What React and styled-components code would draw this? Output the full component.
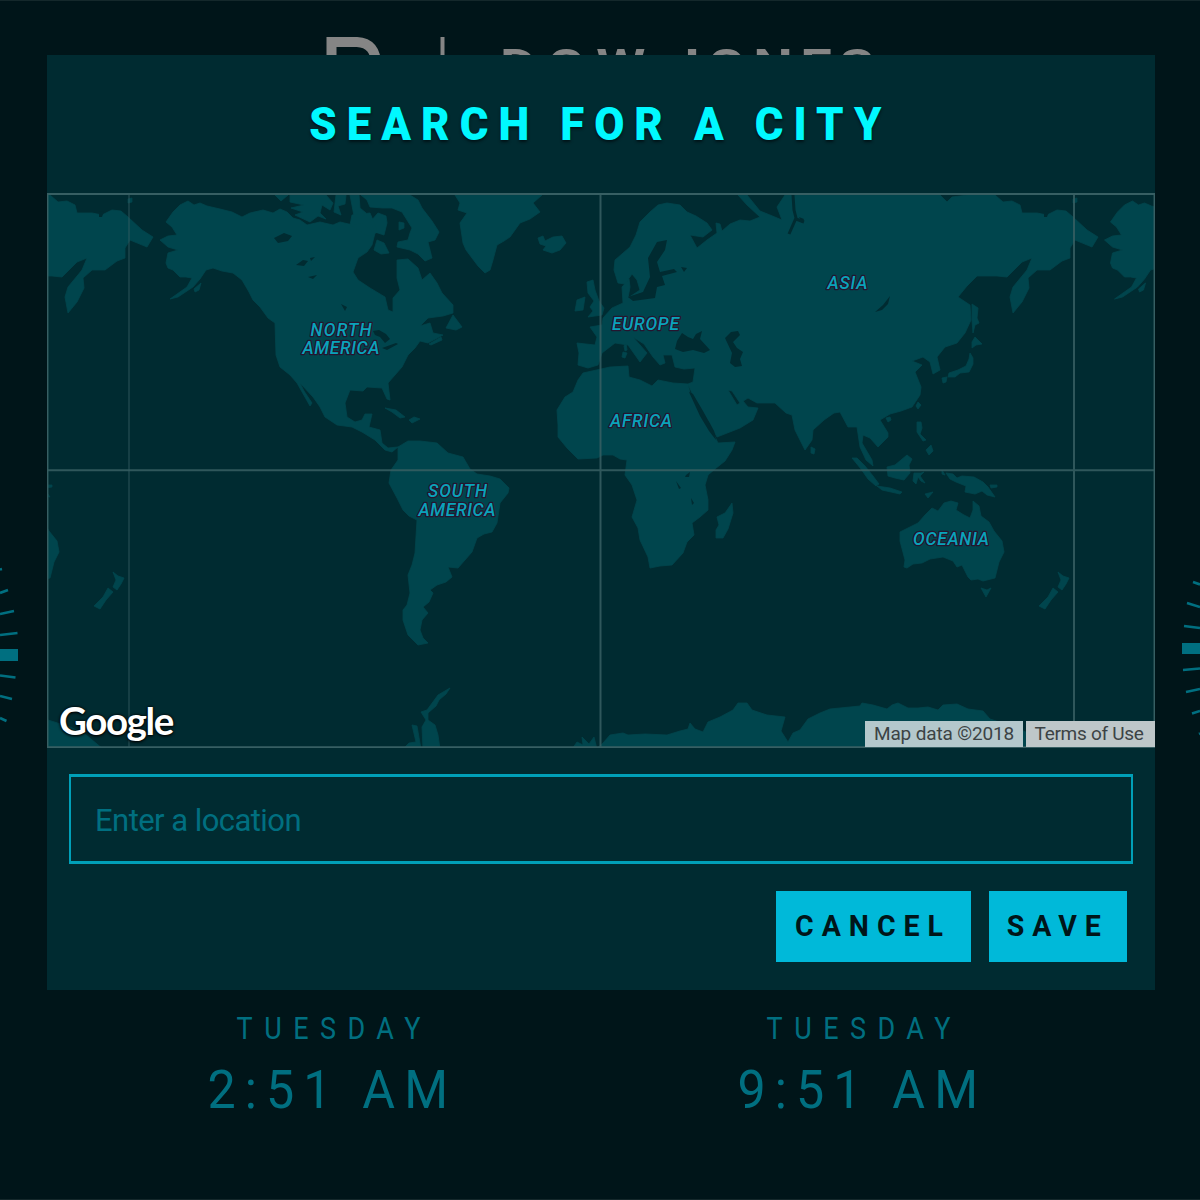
import React from 'react';
import styled, { createGlobalStyle } from 'styled-components';

const color = {
  page: '#001519',
  panel: '#002b31',
  land: '#00454d',
  line: '#375f63',
  teal: '#006f80',
  cyan: '#00b9d9',
  bright: '#00f8ff',
  logo: '#858585',
};

const GlobalStyle = createGlobalStyle`
  *, *::before, *::after { box-sizing: border-box; }
  body { margin: 0; background: ${color.page}; font-family: Roboto, "Liberation Sans", sans-serif; }
`;

const Page = styled.main`
  position: relative;
  width: 1200px;
  height: 1200px;
  overflow: hidden;
  display: flex;
  flex-direction: column;
  background: ${color.page};
  border-top: 1px solid #14282b;
  border-bottom: 1px solid #14282b;
`;

const Masthead = styled.header`
  display: flex;
  align-items: flex-start;
  padding: 36px 0 0 326px;
  height: 120px;
`;

const LogoMark = styled.svg`
  display: block;
  width: 120px;
  height: 60px;
`;

const LogoWords = styled.div`
  display: flex;
  gap: 7px;
  margin: 2px 0 0 54px;
  color: ${color.logo};
  font-size: 46px;
  line-height: 54px;
  font-weight: 700;
  transform: scaleX(1.22);
  transform-origin: left;
`;

const LogoWord = styled.span`
  width: ${(p) => p.$width}px;
  letter-spacing: ${(p) => p.$track}px;
  white-space: nowrap;
`;

const Dials = styled.div`
  display: flex;
  justify-content: space-between;
  height: 200px;
  margin: 419px 0 272px;
`;

const Dial = styled.svg`
  display: block;
  width: 20px;
  height: 200px;
`;

const Clocks = styled.footer`
  display: grid;
  grid-template-columns: 530px 530px;
  justify-content: center;
  height: 187px;
`;

const Clock = styled.div`
  display: flex;
  flex-direction: column;
  align-items: center;
  color: ${color.teal};
`;

const Squeeze = styled.span`
  display: inline-block;
  white-space: nowrap;
  transform: scaleX(${(p) => p.$x});
`;

const Day = styled.div`
  margin-top: -1px;
  padding-right: 2px;
  font-size: 31px;
  line-height: 36px;
  letter-spacing: 13.2px;
`;

const Time = styled.div`
  margin-top: 11px;
  padding-right: 5px;
  font-size: 54px;
  line-height: 64px;
  font-weight: 380;
  letter-spacing: 9.8px;
`;

const Dialog = styled.section`
  position: absolute;
  left: 47px;
  top: 54px;
  width: 1108px;
  height: 935px;
  display: flex;
  flex-direction: column;
  background: ${color.panel};
`;

const DialogHeader = styled.div`
  height: 138px;
  display: flex;
  align-items: center;
  justify-content: center;
`;

const Title = styled.h1`
  margin: 0;
  padding: 0 2px 1px 0;
  color: ${color.bright};
  font-size: 46px;
  line-height: 54px;
  font-weight: 900;
  letter-spacing: 10.6px;
  text-shadow: 0 2px 3px rgba(0, 12, 16, 0.8);
`;

const MapFrame = styled.div`
  position: relative;
  height: 555px;
`;

const MapCanvas = styled.svg`
  display: block;
  width: 100%;
  height: 100%;
`;

const MapText = styled.text`
  font: italic 500 17.5px Roboto, "Liberation Sans", sans-serif;
  fill: #0aa3ba;
  stroke: #25152f;
  stroke-width: 2.6px;
  stroke-linejoin: round;
  paint-order: stroke;
`;

const Brand = styled.div`
  position: absolute;
  left: 12px;
  bottom: 5px;
  color: #fff;
  font: 700 38.5px/46px Lato, sans-serif;
  letter-spacing: -1.4px;
  text-shadow: 0 0 3px #000, 0 1px 3px #000;
`;

const Attribution = styled.div`
  position: absolute;
  right: 0;
  bottom: 1px;
  display: flex;
  gap: 3px;
  height: 26px;
`;

const Credit = styled.span`
  width: ${(p) => p.$width}px;
  padding-right: ${(p) => p.$shift || 0}px;
  background: ${(p) => p.$tint};
  color: #3c4345;
  font-size: 19px;
  line-height: 25px;
  text-align: center;
  white-space: nowrap;
  letter-spacing: ${(p) => p.$track}px;
`;

const Form = styled.form`
  display: flex;
  flex-direction: column;
  gap: 27px;
  padding: 26px 22px 0;
`;

const LocationInput = styled.input`
  display: block;
  width: 1064px;
  height: 90px;
  padding: 2px 24px 0;
  border: 3px solid #00a0b8;
  border-width: 3px 2px;
  outline: none;
  background: transparent;
  color: ${color.cyan};
  font: 400 31px Roboto, "Liberation Sans", sans-serif;
  letter-spacing: -0.55px;
  &::placeholder { color: ${color.teal}; opacity: 1; }
`;

const Actions = styled.div`
  display: flex;
  justify-content: flex-end;
  gap: 18px;
  padding-right: 6px;
`;

const Button = styled.button`
  display: flex;
  align-items: center;
  justify-content: center;
  width: ${(p) => p.$width}px;
  height: 71px;
  padding: 0 1px 3px 0;
  border: 0;
  background: ${color.cyan};
  color: #001519;
  font: 700 30px Roboto, "Liberation Sans", sans-serif;
  letter-spacing: 8.4px;
`;

const LAND = [
  // North America
  'M166 222L173 212L180 205L188 201L194 205L200 203L207 206L220 209L232 212L242 217L250 213L263 210L273 213L280 209L287 212L293 218L300 220L307 225L320 222L333 225L340 222L353 225L362 223L375 233L372 245L367 252L358 258L353 272L358 280L370 288L385 297L388 310L393 312L393 298L400 290L397 278L397 260L408 259L418 268L422 280L430 273L437 283L442 293L453 305L453 313L443 316L428 318L420 326L430 323L433 333L443 335L428 343L420 341L415 348L408 355L402 367L388 383L390 400L387 399L382 388L367 387L363 391L350 390L345 403L347 417L355 422L362 420L365 414L372 414L369 427L380 430L382 443L388 448L398 447L392 452L385 450L375 440L362 432L352 427L337 425L325 417L320 407L313 397L300 383L304 391L312 403L310 406L297 383L290 375L280 367L276 355L275 323L268 318L260 307L253 300L249 292L242 280L233 273L222 271L213 268L206 270L200 279L193 287L178 297L170 299L187 287L192 278L186 277L180 277L173 270L168 268L166 263L168 253L178 250L168 247L160 240L168 236L177 235L172 227Z',
  // Arctic archipelago
  'M275 195H288L281 201ZM290 195H326L333 203L330 210L322 205L320 213L326 219L318 216L310 222L295 215L303 212L291 208L304 205L290 202Z',
  'M336 195H346L345 204L338 206L341 215L334 212ZM350 195H359L360 208L366 213L361 219L354 216ZM378 213L386 216L387 223L384 235L375 232L370 222ZM352 215L370 213L378 232L368 236L350 225Z',
  'M361 195H410L418 200L422 208L432 221L439 232L435 240L428 242L432 258L425 261L418 254L410 250L397 247L398 242L408 240L410 233L412 228L402 212L392 208L383 208L370 207L367 200Z',
  'M377 240L384 243L389 253L381 254L374 250ZM399 222L404 223L404 228L399 230ZM453 315L462 327L456 330L446 328ZM429 344L441 337L442 340L431 345Z',
  'M194 289L201 283L199 290L195 292ZM385 408L396 410L405 417L400 418L392 412ZM409 420L414 417L420 419L412 423Z',
  // Greenland and Iceland
  'M455 195H542L533 203L540 212L530 219L520 223L510 237L504 241L497 245L493 260L490 270L485 273L478 266L472 258L466 250L463 243L460 223L467 213L458 210L460 203Z',
  'M538 238L543 236L545 241L553 237L562 236L566 243L560 250L552 253L543 250L546 246L540 244Z',
  // South America
  'M398 447L408 441L420 441L437 443L448 453L463 457L470 469L477 474L490 476L500 479L509 488L508 493L500 503L497 523L492 532L484 534L477 538L472 552L465 560L458 568L448 567L452 577L446 582L437 585L430 590L433 593L429 602L423 607L428 613L422 620L420 630L423 638L428 643L418 645L408 635L403 620L403 610L407 605L410 593L408 575L412 565L415 553L417 520L409 516L403 510L397 498L389 483L391 470L398 460Z',
  // Africa and Madagascar
  'M583 373L592 371L610 367L628 366L629 377L640 380L652 386L658 380L673 383L688 384L690 393L700 413L715 437L718 443L735 442L732 450L725 461L715 469L708 475L705 485L708 500L708 510L700 517L692 523L694 535L687 542L683 553L672 565L660 566L650 568L648 557L640 540L638 528L632 517L637 500L632 485L625 475L627 460L620 459L613 455L603 455L597 458L578 459L567 448L558 437L558 425L557 410L565 397L573 392L578 380Z',
  'M732 503L733 513L728 529L723 538L716 538L716 530L719 525L717 517L725 513Z',
  // Eurasia
  'M577 343L595 345L597 337L590 327L602 325L603 318L612 308L623 303L622 287L629 279L630 287L628 298L640 290L637 280L632 274L625 284L618 283L614 270L615 260L630 247L636 235L640 222L650 212L658 205L667 203L680 205L687 212L696 216L707 223L712 230L703 237L690 235L697 248L707 240L717 233L716 223L720 224L722 231L730 224L740 220L750 221L760 217L747 205L738 195H747L760 211L770 215L782 220L777 207L785 195H940L947 202L952 197L968 195H995L1003 202L1012 201L1020 205L1022 213L1037 213L1047 215L1057 210L1066 211L1073 217L1087 230L1098 237L1092 247L1075 240L1070 248L1070 258L1062 261L1050 270L1037 270L1028 278L1029 288L1022 302L1013 313L1010 297L1013 287L1027 270L1032 258L1022 262L1007 277L997 276L977 276L967 286L958 297L970 305L971 320L965 333L957 343L945 347L937 357L940 370L933 374L930 362L923 357L912 361L922 365L915 372L921 387L920 395L912 407L901 411L890 414L880 420L888 433L888 437L878 447L870 438L863 435L862 443L872 460L873 466L866 460L860 447L857 427L848 427L840 412L834 413L824 420L813 430L812 440L805 450L795 430L792 415L786 413L775 403L757 403L748 398L740 403L732 391L728 390L737 405L743 401L748 407L758 408L753 420L740 428L717 437L710 423L703 413L692 393L688 384L693 382L695 368L684 369L675 367L672 355L663 355L665 363L660 365L653 357L644 344L633 337L647 353L640 362L628 345L615 343L602 353L598 365L588 368L578 365L579 353Z',
  // British Isles and the Mediterranean islands
  'M587 282L593 280L595 290L599 301L604 308L602 315L588 317L593 311L590 307L594 301L588 293ZM577 300L585 297L583 310L575 311ZM624 346L626 343L627 350L625 351ZM623 352L627 353L625 358L622 357Z',
  // Japan, Sakhalin and Taiwan
  'M972 304L978 308L977 318L979 323L975 325L973 333L972 320ZM975 337L982 344L976 345L972 348L972 342ZM970 353L973 358L973 364L969 372L960 373L955 377L948 377L949 373L958 370L966 366L969 359ZM942 378L947 377L946 382L943 383ZM918 402L921 405L918 409L916 406Z',
  // South-east Asia
  'M886 418L890 417L891 420L888 422ZM917 422L921 422L922 428L920 434L926 440L923 441L917 432ZM926 450L931 445L933 451L929 455ZM811 447L815 449L814 454L811 453ZM852 458L857 458L865 466L873 476L879 484L876 486L868 479L861 469ZM877 486L890 488L902 492L900 494L882 490Z',
  'M887 467L895 465L901 460L907 455L912 459L909 465L910 473L904 480L895 478L888 476ZM914 473L921 473L924 472L920 476L925 483L921 481L918 477L916 484L913 481ZM946 473L953 474L957 478L962 476L974 477L983 482L988 487L995 497L987 495L982 491L975 494L965 492L966 486L956 482L950 479Z',
  'M990 485L997 485L997 487L991 488ZM925 494L933 492L928 498ZM942 470L945 475L942 474Z',
  // Oceania
  'M900 532L918 523L925 515L932 508L938 511L944 503L951 501L958 503L956 510L964 515L970 518L973 510L973 501L979 506L981 516L989 522L994 531L1002 541L1004 552L999 562L995 578L983 581L978 579L971 580L968 577L965 571L962 565L957 567L953 561L943 557L930 559L922 563L913 564L907 568L904 567L905 560L900 541Z',
  'M981 588L987 590L991 588L986 597ZM1058 572L1063 576L1069 578L1066 584L1062 590L1058 587L1061 580ZM1053 588L1058 592L1051 600L1045 609L1039 606L1048 597ZM1073 199L1077 198L1077 202L1073 203Z',
  // Antarctica
  'M450 688L446 694L439 700L436 706L428 713L428 720L435 725L438 735L440 749H423L422 727L426 720L421 712L427 710L438 695ZM403 749L409 743L416 742L412 725L417 726L421 749ZM572 749L577 742L583 745L582 737L589 744L594 737L597 749Z',
  'M596 749L603 743L610 735L623 733L628 735L645 734L667 735L680 731L688 729L690 723L695 729L703 732L708 722L720 717L733 710L738 703L747 703L752 710L767 715L785 717L781 731L788 742L793 733L800 730L808 719L820 713L830 709L860 706L862 703L873 705L887 709L892 705L898 703L908 708L918 708L928 707L938 710L943 705L957 704L968 709L983 711L990 719L1015 727L1030 734L1048 749Z',
].join('');

const WATER = [
  // Baltic
  'M667 240L657 242L648 258L650 277L643 292L628 297L633 301L655 298L657 287L665 285L662 276L677 272L674 269L660 272L657 262L665 250Z',
  // Black Sea, Azov and Caspian
  'M682 333L688 337L693 339L696 334L702 331L700 339L710 350L704 353L693 350L683 352L675 349L677 341ZM738 331L731 332L725 338L732 353L730 363L735 367L742 366L740 359L743 352L737 348L733 342L740 335Z',
  // Red Sea
  'M689 392L693 394L703 411L714 431L716 440L709 431L700 416Z',
  // Great Lakes and northern lakes
  'M373 331L379 330L386 334L390 339L385 343L380 337L375 335ZM382 348L396 343L398 344L387 350ZM274 238L284 233L292 236L288 241L278 243ZM296 265L303 260L308 261L304 266ZM308 277L317 275L313 279ZM310 258L315 257L311 261ZM341 304L347 307L345 311ZM681 267L687 268L684 272ZM686 475L690 472L689 477L685 477ZM676 481L681 488L679 489ZM691 498L694 503L692 505ZM890 296L888 304L882 310L875 312L883 305ZM799 217L804 219L802 223ZM1044 212L1049 211L1047 217L1044 217Z',
].join('');

const LABELS = [
  { text: 'NORTH', x: 341, y: 336.2, width: 61 },
  { text: 'AMERICA', x: 341, y: 354, width: 77 },
  { text: 'SOUTH', x: 457.5, y: 497.3, width: 59 },
  { text: 'AMERICA', x: 457, y: 515.6, width: 77 },
  { text: 'EUROPE', x: 645.5, y: 329.5, width: 67 },
  { text: 'AFRICA', x: 641, y: 427.3, width: 62 },
  { text: 'ASIA', x: 847.5, y: 288.7, width: 40 },
  { text: 'OCEANIA', x: 951, y: 545.3, width: 76 },
];

const LEFT_TICKS = 'M0 29.5L2 29M0 53L8 50M0 74L14 71M0 95L17.5 93M0 135.5L15.5 137.5M0 156L12 159M0 178L6.5 181';
const RIGHT_TICKS = 'M13 42L20 44.5M7 63L20 67M4 86L20 88M3 130L20 128.5M6 152L20 149M12 173.5L20 171M19 194L20 193.5';

function WorldMap() {
  return (
    <MapCanvas viewBox="47 193 1108 555" role="img" aria-label="World map">
      <defs>
        <g id="world">
          <path d={LAND} fill={color.land} stroke={color.land} strokeWidth="0.8" strokeLinejoin="round" />
          <path d={WATER} fill={color.panel} />
          <path d="M793 195L794 210L796 218L789 234M796 219L804 222" fill="none" stroke={color.panel} strokeWidth="3" />
        </g>
      </defs>
      <use href="#world" />
      <use href="#world" x="-945" />
      <use href="#world" x="944.5" />
      <g fill="none" stroke={color.line}>
        <path d="M129 193V748" strokeWidth="2" opacity="0.4" />
        <path d="M600.5 193V748M1074 193V748M47 470.3H1155" strokeWidth="2" opacity="0.85" />
        <path d="M47 194H1155M47 747.3H1155" strokeWidth="2.2" />
        <path d="M47.7 193V748M1154.3 193V748" strokeWidth="1.5" />
      </g>
      {LABELS.map((l) => (
        <MapText key={l.text + l.y} x={l.x - l.width / 2} y={l.y} textLength={l.width}>
          {l.text}
        </MapText>
      ))}
    </MapCanvas>
  );
}

function ClockFace({ day, time }) {
  return (
    <Clock>
      <Day><Squeeze $x={0.87}>{day}</Squeeze></Day>
      <Time><Squeeze $x={0.93}>{time}</Squeeze></Time>
    </Clock>
  );
}

export default function App() {
  return (
    <>
      <GlobalStyle />
      <Page>
        <Masthead>
          <LogoMark viewBox="0 0 120 60" aria-hidden="true">
            <path d="M5.5 60V5H31Q50 6 50 28V60" fill="none" stroke={color.logo} strokeWidth="10" />
            <path d="M116.5 0V60" stroke={color.logo} strokeWidth="4" />
          </LogoMark>
          <LogoWords>
            <LogoWord $width={131} $track={8.6}>DOW</LogoWord>
            <LogoWord $width={170} $track={6.1}>JONES</LogoWord>
          </LogoWords>
        </Masthead>
        <Dials>
          <Dial viewBox="0 0 20 200" aria-hidden="true">
            <path d={LEFT_TICKS} stroke={color.teal} strokeWidth="2.6" />
            <path d="M0 109H18V121H0Z" fill={color.teal} />
          </Dial>
          <Dial viewBox="0 0 20 200" aria-hidden="true">
            <path d={RIGHT_TICKS} stroke={color.teal} strokeWidth="2.6" />
            <path d="M2 103H20V114H2Z" fill={color.teal} />
          </Dial>
        </Dials>
        <Clocks>
          <ClockFace day="TUESDAY" time="2:51 AM" />
          <ClockFace day="TUESDAY" time="9:51 AM" />
        </Clocks>
        <Dialog role="dialog" aria-label="Search for a city">
          <DialogHeader>
            <Title><Squeeze $x={0.95}>SEARCH FOR A CITY</Squeeze></Title>
          </DialogHeader>
          <MapFrame>
            <WorldMap />
            <Brand>Google</Brand>
            <Attribution>
              <Credit $width={158} $tint="#b4c8cc" $track={-0.16}>Map data ©2018</Credit>
              <Credit $width={129} $tint="#bec7c9" $track={-0.3} $shift={3}>Terms of Use</Credit>
            </Attribution>
          </MapFrame>
          <Form>
            <LocationInput placeholder="Enter a location" />
            <Actions>
              <Button type="button" $width={195}><Squeeze $x={0.95}>CANCEL</Squeeze></Button>
              <Button type="button" $width={138}><Squeeze $x={0.95}>SAVE</Squeeze></Button>
            </Actions>
          </Form>
        </Dialog>
      </Page>
    </>
  );
}
